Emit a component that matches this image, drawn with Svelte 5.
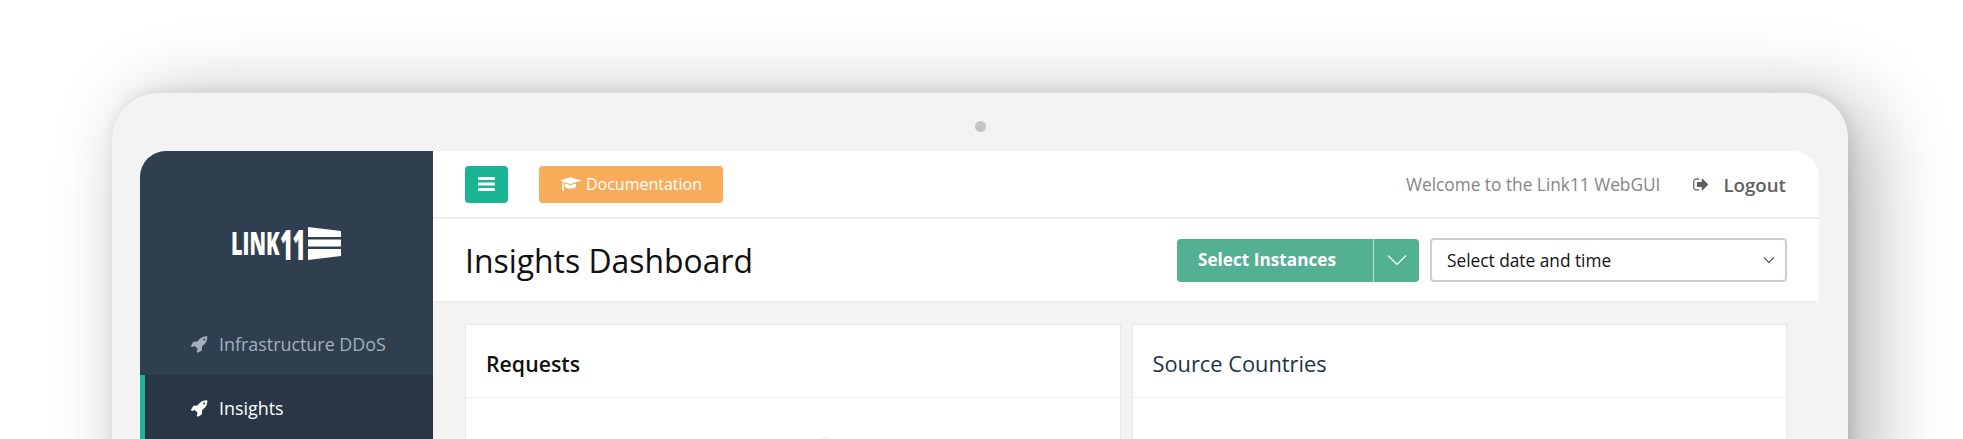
<script>
  const rocket = "M1504 448q0-40-28-68t-68-28-68 28-28 68 28 68 68 28 68-28 28-68zm224-288q0 249-75.5 430.5t-253.5 360.5q-81 80-195 176l-20 379q-2 16-16 26l-384 224q-7 4-16 4-12 0-23-9l-64-64q-13-14-8-32l85-276-281-281-276 85q-3 1-9 1-14 0-23-9l-64-64q-17-19-5-39l224-384q10-14 26-16l379-20q96-114 176-195 188-187 358-258t431-71q14 0 24 9.500t10 22.500z";
  const navItems = [
    { label: "Infrastructure DDoS", active: false },
    { label: "Insights", active: true }
  ];
</script>

<div class="page">
  <div class="tablet">
    <span class="camera"></span>
    <div class="screen">
      <aside class="sidebar">
        <div class="logo">
          <span class="link"><span>LINK</span></span><span class="eleven"><span>11</span></span>
          <svg width="33" height="33" viewBox="0 0 33 33" fill="#fff">
            <polygon points="0,0 33,4 33,10 0,10" />
            <polygon points="0,12.500 33,12.500 33,19.500 0,19.500" />
            <polygon points="0,22 33,22 33,29 0,33" />
          </svg>
        </div>
        <nav>
          {#each navItems as item}
            <div class="nav-item" class:active={item.active}>
              <svg width="18" height="18" viewBox="0 0 1792 1792" fill="currentColor"><path d={rocket} /></svg>
              <span>{item.label}</span>
            </div>
          {/each}
        </nav>
      </aside>
      <main>
        <header class="topbar">
          <button class="menu" aria-label="Menu">
            <svg width="17" height="14" viewBox="0 0 17 14" fill="#fff">
              <rect width="17" height="3" y="0" rx="0.5" />
              <rect width="17" height="3" y="5.500" rx="0.5" />
              <rect width="17" height="3" y="11" rx="0.5" />
            </svg>
          </button>
          <button class="docs">
            <svg width="21" height="16" viewBox="0 0 2304 1792" fill="#fff"><path d="M1774 836l18 316q4 69-82 128t-235 93.500-323 34.500-323-34.500-235-93.500-82-128l18-316 574 181q22 7 48 7t48-7zm530-324q0 23-22 31l-1120 352q-4 1-10 1t-10-1l-652-206q-43 34-71 111.500t-34 178.500q63 36 63 109 0 69-58 107l58 433q2 14-8 25-9 11-24 11h-192q-15 0-24-11-10-11-8-25l58-433q-58-38-58-107 0-73 65-111 11-207 98-330l-333-104q-22-8-22-31t22-31l1120-352q4-1 10-1t10 1l1120 352q22 8 22 31z" /></svg>
            Documentation
          </button>
          <span class="welcome">Welcome to the Link11 WebGUI</span>
          <span class="logout">
            <svg width="17" height="17" viewBox="0 0 1664 1792" fill="currentColor"><path d="M704 1440q0 4 1 20t.5 26.500-3 23.500-10 19.500-20.500 6.500h-320q-119 0-203.500-84.500t-84.500-203.500v-704q0-119 84.500-203.500t203.500-84.500h320q13 0 22.500 9.500t9.500 22.500q0 4 1 20t.5 26.500-3 23.500-10 19.500-20.500 6.500h-320q-66 0-113 47t-47 113v704q0 66 47 113t113 47h312l11.500 1 11.500 3 8 5.500 7 9 2 13.500zm928-544q0 26-19 45l-544 544q-19 19-45 19t-45-19-19-45v-288h-448q-26 0-45-19t-19-45v-384q0-26 19-45t45-19h448v-288q0-26 19-45t45-19 45 19l544 544q19 19 19 45z" /></svg>
            Logout
          </span>
        </header>
        <div class="titlebar">
          <h1>Insights Dashboard</h1>
          <div class="instances">
            <span class="inst-label">Select Instances</span>
            <span class="inst-caret">
              <svg width="20" height="12" viewBox="0 0 20 12" fill="none" stroke="#fff" stroke-width="1.200"><path d="M1 1.500l9 9 9-9" /></svg>
            </span>
          </div>
          <div class="date">
            <span>Select date and time</span>
            <svg width="12" height="8" viewBox="0 0 12 8" fill="none" stroke="#555" stroke-width="1.100"><path d="M1 1.500l5 5 5-5" /></svg>
          </div>
        </div>
        <div class="content">
          <section class="card">
            <h2 class="dark">Requests</h2>
            <div class="card-body">
              <svg class="chart" width="130" height="41" viewBox="0 0 130 41" fill="none" stroke="#d8f4ec" stroke-width="1"><path d="M100 41L104 40L108 41" /></svg>
            </div>
          </section>
          <section class="card">
            <h2>Source Countries</h2>
            <div class="card-body"></div>
          </section>
        </div>
      </main>
    </div>
  </div>
</div>

<style>
  :global(body) {
    margin: 0;
    background: #fff;
    font-family: "Open Sans", "Liberation Sans", sans-serif;
  }

  .page {
    height: 439px;
    padding: 92px 115px 0 112px;
    box-sizing: border-box;
    overflow: hidden;
  }

  .tablet {
    position: relative;
    height: 420px;
    padding: 58px 29px 0 28px;
    background: #f3f3f3;
    border-radius: 46px 46px 0 0;
    border-top: 1px solid #dcdcdc;
    box-sizing: border-box;
    box-shadow: 22px 10px 80px rgba(0, 0, 0, 0.3), 2px 0 14px rgba(0, 0, 0, 0.1);
  }

  .camera {
    position: absolute;
    top: 28px;
    left: 863px;
    width: 11px;
    height: 11px;
    border-radius: 50%;
    background: #c4c4c4;
  }

  .screen {
    display: flex;
    height: 360px;
    border-radius: 26px 26px 0 0;
    overflow: hidden;
  }

  .sidebar {
    width: 293px;
    flex: none;
    background: #2f3f4f;
  }

  .logo {
    display: flex;
    align-items: center;
    height: 160px;
    box-sizing: border-box;
    padding: 24px 0 0 91px;
    color: #fff;
    font-weight: 800;
    line-height: 1;
  }

  .link,
  .eleven {
    display: block;
    white-space: nowrap;
  }

  .link span,
  .eleven span {
    display: inline-block;
    transform-origin: left center;
  }

  .link {
    width: 49px;
    font-size: 32px;
  }

  .link span {
    transform: scaleX(0.62);
  }

  .eleven {
    width: 28px;
    font-size: 43px;
  }

  .eleven span {
    transform: scaleX(0.52);
    letter-spacing: -1px;
  }

  .nav-item {
    display: flex;
    align-items: center;
    gap: 11px;
    height: 63px;
    padding: 1px 0 0 50px;
    font-size: 17.900px;
    font-weight: 500;
    color: #a3afbf;
  }

  .nav-item.active {
    padding-left: 45px;
    border-left: 5px solid #1ab394;
    background: #293645;
    color: #fff;
  }

  main {
    flex: 1;
    display: flex;
    flex-direction: column;
    background: #f3f3f4;
  }

  .topbar {
    display: flex;
    align-items: center;
    height: 66px;
    padding: 0 33px 0 32px;
    background: #fff;
    border-bottom: 2px solid #eceeef;
    flex: none;
  }

  button {
    border: 0;
    font: inherit;
    display: flex;
    align-items: center;
    justify-content: center;
  }

  .menu {
    width: 43px;
    height: 37px;
    background: #1ab394;
    border-radius: 4px;
  }

  .docs {
    gap: 5px;
    width: 184px;
    height: 37px;
    margin-left: 31px;
    background: #f8ac59;
    border-radius: 4px;
    color: #fff;
    font-size: 16px;
  }

  .welcome {
    margin-left: auto;
    color: #858585;
    font-size: 17.300px;
  }

  .logout {
    display: flex;
    align-items: center;
    gap: 14px;
    margin-left: 32px;
    color: #5f5f5f;
    font-size: 18.700px;
    font-weight: 600;
  }

  .titlebar {
    display: flex;
    align-items: center;
    height: 82px;
    padding: 0 32px;
    background: #fff;
    border-bottom: 2px solid #eceeef;
    flex: none;
  }

  h1 {
    margin: 0 auto 0 0;
    font-size: 31.900px;
    font-weight: 400;
    color: #111;
  }

  .instances {
    display: flex;
    height: 43px;
    border-radius: 4px;
    overflow: hidden;
    color: #fff;
    background: #53b093;
  }

  .inst-label {
    width: 197px;
    box-sizing: border-box;
    padding-left: 21px;
    border-right: 1px solid #bfe3d7;
    font-size: 17.200px;
    font-weight: 700;
    line-height: 41px;
  }

  .inst-caret {
    display: flex;
    align-items: center;
    justify-content: center;
    width: 45px;
  }

  .date {
    display: flex;
    align-items: center;
    justify-content: space-between;
    width: 357px;
    height: 44px;
    margin-left: 11px;
    padding: 0 10px 0 15px;
    box-sizing: border-box;
    border: 2px solid #cfcfcf;
    border-radius: 4px;
    font-size: 17.300px;
    color: #111;
  }

  .content {
    display: flex;
    gap: 11px;
    padding: 21px 32px 0;
  }

  .card {
    flex: 1;
    background: #fff;
    border: 1px solid #e5e7e8;
    border-bottom: 0;
  }

  h2 {
    margin: 0;
    height: 69px;
    padding: 3px 0 0 20px;
    border-bottom: 1.500px solid #eceeef;
    color: #1e3246;
    font-size: 21.800px;
    font-weight: 500;
    line-height: 72px;
  }

  h2.dark {
    color: #111;
    font-size: 21.300px;
    font-weight: 600;
  }

  .card-body {
    height: 60px;
    display: flex;
    justify-content: flex-end;
  }

  .chart {
    margin-right: 269px;
  }
</style>
